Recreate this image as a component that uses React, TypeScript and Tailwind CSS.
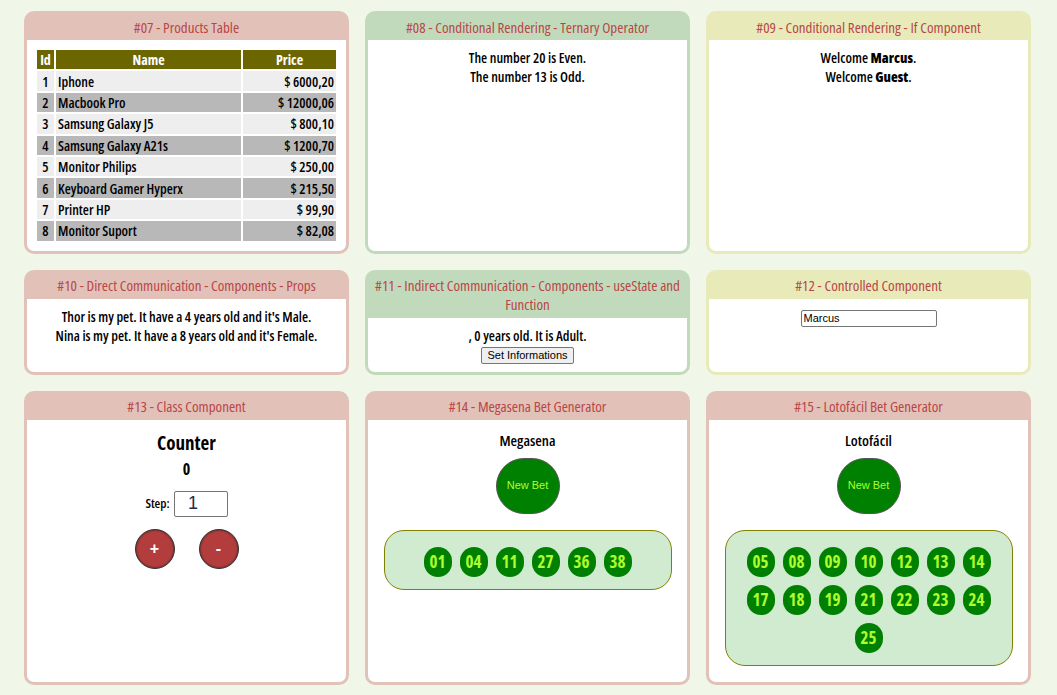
import { ReactNode } from "react"

type Tone = "pink" | "green" | "yellow"

const toneClass: Record<Tone, string> = {
  pink: "border-[#e2c1b9] bg-[#e2c1b9]",
  green: "border-[#c1dabc] bg-[#c1dabc]",
  yellow: "border-[#e8eab9] bg-[#e8eab9]",
}

type CardProps = {
  title: ReactNode
  tone: Tone
  children: ReactNode
}

function Card({ title, tone, children }: CardProps) {
  return (
    <div className={`flex flex-col rounded-[10px] border-[3px] overflow-hidden ${toneClass[tone]}`}>
      <h3 className="px-1 py-[3.5px] text-center text-[15px] leading-[19px] font-normal text-[#b94646]">
        {title}
      </h3>
      <div className="flex-1 bg-white p-2">{children}</div>
    </div>
  )
}

const products = [
  { id: 1, name: "Iphone", price: "$ 6000,20" },
  { id: 2, name: "Macbook Pro", price: "$ 12000,06" },
  { id: 3, name: "Samsung Galaxy J5", price: "$ 800,10" },
  { id: 4, name: "Samsung Galaxy A21s", price: "$ 1200,70" },
  { id: 5, name: "Monitor Philips", price: "$ 250,00" },
  { id: 6, name: "Keyboard Gamer Hyperx", price: "$ 215,50" },
  { id: 7, name: "Printer HP", price: "$ 99,90" },
  { id: 8, name: "Monitor Suport", price: "$ 82,08" },
]

const megasena = ["01", "04", "11", "27", "36", "38"]
const lotofacil = [
  "05", "08", "09", "10", "12", "13", "14",
  "17", "18", "19", "21", "22", "23", "24",
  "25",
]

function Ball({ value }: { value: string }) {
  return (
    <span className="flex h-[30px] w-[28px] items-center justify-center rounded-full bg-[#008000] text-[17px] font-bold leading-none text-[#adff2f]">
      {value}
    </span>
  )
}

function BetGenerator({ name, numbers }: { name: string; numbers: string[] }) {
  return (
    <div className="flex flex-col items-center px-2 pt-[2px] pb-2">
      <h4 className="text-[15px] leading-[20px] font-semibold text-black">{name}</h4>
      <button className="mt-2 h-[56px] w-[64px] rounded-full border border-[#555] bg-[#008000] font-['Liberation_Sans',Arial,sans-serif] [font-stretch:100%] text-[11px] text-[#adff2f]">
        New Bet
      </button>
      <div className="mt-4 flex w-[288px] flex-wrap justify-center gap-2 rounded-[20px] border border-[#808000] bg-[#d0ebd0] px-5 pt-4 pb-3">
        {numbers.map((n) => (
          <Ball key={n} value={n} />
        ))}
      </div>
    </div>
  )
}

export default function App() {
  return (
    <div className="min-h-[695px] bg-[#f0f6e8] pt-[11px] pl-[24px] font-['Open_Sans',sans-serif] [font-stretch:75%] text-black">
      <div className="grid w-[1007px] grid-cols-3 gap-4">
        {/* #07 */}
        <Card title="#07 - Products Table" tone="pink">
          <table className="w-full border-separate border-spacing-[2px] text-[14px] font-semibold leading-[19px]">
            <thead>
              <tr className="bg-[#6b6600] text-white font-bold">
                <th className="w-[17px] h-[19.4px]">Id</th>
                <th>Name</th>
                <th className="w-[93px]">Price</th>
              </tr>
            </thead>
            <tbody>
              {products.map((p, i) => (
                <tr key={p.id} className={i % 2 === 0 ? "bg-[#eeeeee]" : "bg-[#b8b8b8]"}>
                  <td className="h-[19.4px] text-center">{p.id}</td>
                  <td className="px-[2px]">{p.name}</td>
                  <td className="px-[2px] text-right">{p.price}</td>
                </tr>
              ))}
            </tbody>
          </table>
        </Card>

        {/* #08 */}
        <Card title="#08 - Conditional Rendering - Ternary Operator" tone="green">
          <div className="text-center text-[14px] leading-[19px] font-semibold">
            <p>The number 20 is Even.</p>
            <p>The number 13 is Odd.</p>
          </div>
        </Card>

        {/* #09 */}
        <Card title="#09 - Conditional Rendering - If Component" tone="yellow">
          <div className="text-center text-[14px] leading-[19px] font-semibold">
            <p>
              Welcome <b>Marcus</b>.
            </p>
            <p>
              Welcome <b>Guest</b>.
            </p>
          </div>
        </Card>

        {/* #10 */}
        <Card title="#10 - Direct Communication - Components - Props" tone="pink">
          <div className="text-center text-[14px] leading-[19px] font-semibold">
            <p>Thor is my pet. It have a 4 years old and it's Male.</p>
            <p>Nina is my pet. It have a 8 years old and it's Female.</p>
          </div>
        </Card>

        {/* #11 */}
        <Card
          title={
            <>
              #11 - Indirect Communication - Components - useState and
              <br />
              Function
            </>
          }
          tone="green"
        >
          <div className="flex flex-col items-center text-[14px] leading-[19px] font-semibold">
            <p>, 0 years old. It is Adult.</p>
            <button className="mt-[2px] h-[17px] rounded-[2px] border border-[#767676] bg-[#efefef] px-[5px] font-['Liberation_Sans',Arial,sans-serif] [font-stretch:100%] text-[11px] leading-[15px] font-normal">
              Set Informations
            </button>
          </div>
        </Card>

        {/* #12 */}
        <Card title="#12 - Controlled Component" tone="yellow">
          <div className="flex justify-center pt-[3px]">
            <input
              type="text"
              defaultValue="Marcus"
              className="h-[17px] w-[136px] rounded-[2px] border border-[#767676] px-[2px] font-['Liberation_Sans',Arial,sans-serif] [font-stretch:100%] text-[11px] text-black outline-none"
            />
          </div>
        </Card>

        {/* #13 */}
        <Card title="#13 - Class Component" tone="pink">
          <div className="flex flex-col items-center pt-[2px]">
            <h2 className="text-[19px] leading-[26px] font-bold">Counter</h2>
            <p className="mt-[4px] text-[16px] leading-[18px] font-bold">0</p>
            <div className="mt-[13px] flex items-center gap-[4px]">
              <label className="text-[13px] font-semibold">Step:</label>
              <input
                type="number"
                defaultValue={1}
                className="h-[26px] w-[54px] rounded-[2px] border border-[#767676] text-center font-['Liberation_Sans',Arial,sans-serif] [font-stretch:100%] text-[18px] text-[#1c2c4c] outline-none [appearance:textfield]"
              />
            </div>
            <div className="mt-[12px] flex gap-6">
              <button className="h-[40px] w-[40px] rounded-full border border-[#333] bg-[#b33c3c] font-['Liberation_Sans',Arial,sans-serif] [font-stretch:100%] text-[16px] font-bold text-white shadow-[inset_0_0_2px_#222]">
                +
              </button>
              <button className="h-[40px] w-[40px] rounded-full border border-[#333] bg-[#b33c3c] font-['Liberation_Sans',Arial,sans-serif] [font-stretch:100%] text-[16px] font-bold text-white shadow-[inset_0_0_2px_#222]">
                -
              </button>
            </div>
          </div>
        </Card>

        {/* #14 */}
        <Card title="#14 - Megasena Bet Generator" tone="pink">
          <BetGenerator name="Megasena" numbers={megasena} />
        </Card>

        {/* #15 */}
        <Card title="#15 - Lotofácil Bet Generator" tone="pink">
          <BetGenerator name="Lotofácil" numbers={lotofacil} />
        </Card>
      </div>
    </div>
  )
}
